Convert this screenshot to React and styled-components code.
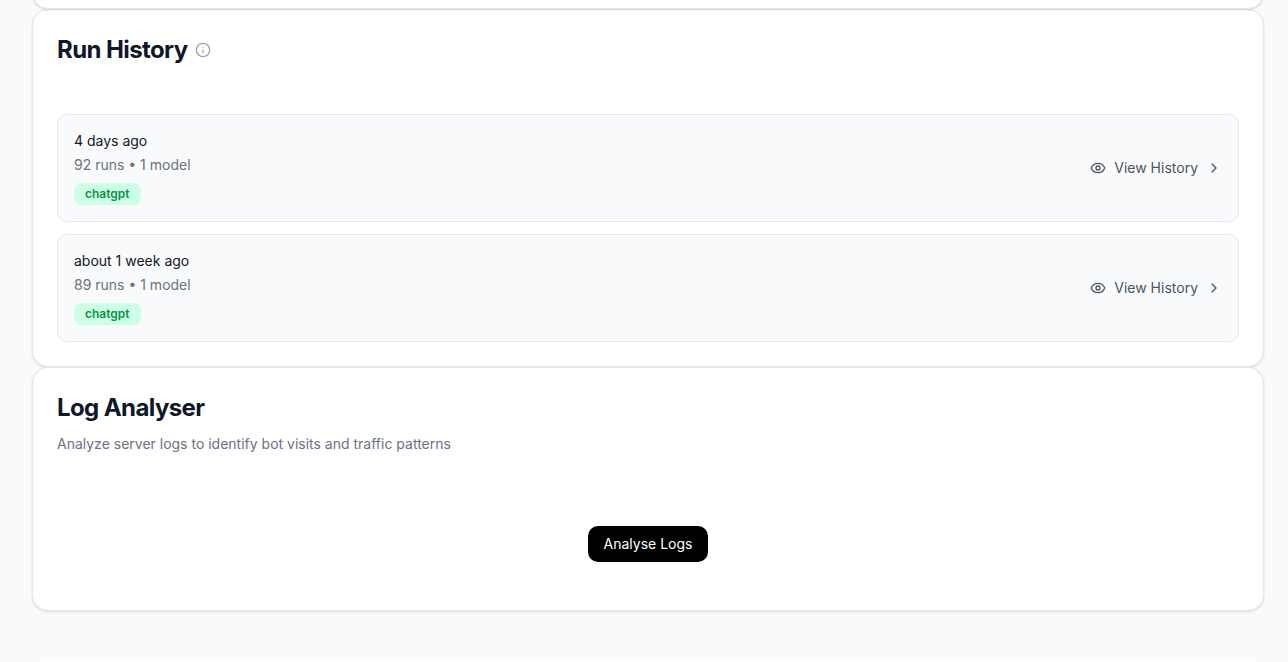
import styled, { createGlobalStyle } from "styled-components";
import { ChevronRight, Eye, Info } from "lucide-react";

const runs = [
    { id: 1, date: "4 days ago", summary: "92 runs • 1 model", model: "chatgpt" },
    { id: 2, date: "about 1 week ago", summary: "89 runs • 1 model", model: "chatgpt" },
];

export default function App() {
    return (
        <>
            <GlobalStyle />
            <Page>
                <PreviousSection>
                    <Card />
                </PreviousSection>

                <Card>
                    <CardHeader>
                        <TitleRow>
                            <Title>Run History</Title>
                            <InfoButton type="button" aria-label="About run history">
                                <Info size={16} />
                            </InfoButton>
                        </TitleRow>
                    </CardHeader>
                    <RunList>
                        {runs.map((run) => (
                            <RunItem key={run.id} run={run} />
                        ))}
                    </RunList>
                </Card>

                <Card>
                    <CardHeader>
                        <Title>Log Analyser</Title>
                        <Description>Analyze server logs to identify bot visits and traffic patterns</Description>
                    </CardHeader>
                    <Actions>
                        <PrimaryButton type="button">Analyse Logs</PrimaryButton>
                    </Actions>
                </Card>

                <NextSection />
            </Page>
        </>
    );
}

function RunItem({ run }) {
    return (
        <Run>
            <div>
                <RunDate>{run.date}</RunDate>
                <RunSummary>{run.summary}</RunSummary>
                <Badge>{run.model}</Badge>
            </div>
            <HistoryButton type="button">
                <Eye size={16} />
                View History
                <ChevronRight size={16} />
            </HistoryButton>
        </Run>
    );
}

const GlobalStyle = createGlobalStyle`
    *{
        box-sizing: border-box;
        margin: 0;
        padding: 0;
    }

    body{
        background-color: #fafafa;
        color: #0f172a;
        font-family: 'Inter', sans-serif;
        font-size: 14px;
        line-height: 20px;
    }

    button{
        font: inherit;
        border: none;
        background: none;
        cursor: pointer;
    }
`;

const Page = styled.main`
    height: 100vh;
    padding: 0 24px 0 32px;
    overflow: hidden;
`;

const Card = styled.section`
    width: 100%;
    min-height: 48px;
    background-color: #ffffff;
    border: 1px solid #e5e7eb;
    border-radius: 16px;
    box-shadow: 0 1px 3px 0 rgba(0,0,0,0.1), 0 1px 2px -1px rgba(0,0,0,0.1);
`;

/* only the lower edge of this card is scrolled into view */
const PreviousSection = styled.div`
    height: 9px;
    display: flex;
    align-items: flex-end;
`;

const NextSection = styled.section`
    height: 48px;
    margin-top: 48px;
    background-color: #ffffff;
    border-radius: 16px;
`;

const CardHeader = styled.header`
    display: flex;
    flex-direction: column;
    gap: 10px;
    padding: 24px;
`;

const TitleRow = styled.div`
    display: flex;
    align-items: center;
    gap: 8px;
`;

const Title = styled.h2`
    font-size: 24px;
    line-height: 32px;
    font-weight: 700;
    letter-spacing: -0.025em;
`;

const InfoButton = styled.button`
    display: flex;
    color: #9ca3af;
`;

const Description = styled.p`
    color: #6b7280;
`;

const RunList = styled.ul`
    display: flex;
    flex-direction: column;
    gap: 12px;
    padding: 24px;
    list-style: none;
`;

const Run = styled.li`
    display: flex;
    align-items: center;
    justify-content: space-between;
    padding: 16px;
    background-color: #f9fafb;
    border: 1px solid #e2e8f0;
    border-radius: 10px;
`;

const RunDate = styled.p`
    color: #111827;
`;

const RunSummary = styled.p`
    margin-top: 4px;
    color: #6b7280;
`;

const Badge = styled.span`
    display: block;
    width: fit-content;
    margin-top: 8px;
    padding: 3px 11px;
    border-radius: 8px;
    background-color: #ccffe6;
    color: #0f9246;
    font-size: 12px;
    line-height: 16px;
    font-weight: 600;
`;

const HistoryButton = styled.button`
    display: flex;
    align-items: center;
    gap: 8px;
    color: #4b5563;
`;

const Actions = styled.div`
    display: flex;
    justify-content: center;
    padding: 48px 24px;
`;

const PrimaryButton = styled.button`
    height: 36px;
    padding: 8px 16px;
    border-radius: 10px;
    background-color: #000000;
    color: #ffffff;
`;
